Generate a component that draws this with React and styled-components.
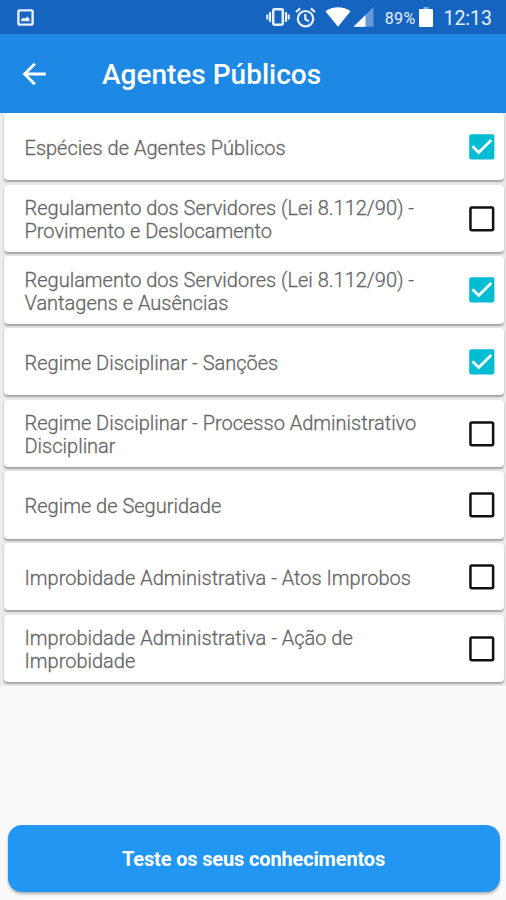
import React from "react";
import styled, { createGlobalStyle } from "styled-components";

const PRIMARY = "#1e88e5";
const PRIMARY_DARK = "#1565c0";
const BUTTON_COLOR = "#2196f3";
const ACCENT = "#00bcd4";

const GlobalStyle = createGlobalStyle`
  * {
    box-sizing: border-box;
  }
  body {
    margin: 0;
    font-family: Roboto, "Liberation Sans", sans-serif;
  }
`;

const Screen = styled.div`
  display: flex;
  flex-direction: column;
  height: 900px;
  overflow: hidden;
  background: #fafafa;
`;

const StatusBar = styled.div`
  display: flex;
  flex: none;
  align-items: center;
  height: 34px;
  padding: 0 14px 0 17px;
  background: ${PRIMARY_DARK};
  color: #e8effa;
  svg {
    display: block;
    flex: none;
  }
`;

const StatusIcons = styled.div`
  display: flex;
  align-items: center;
  margin-left: auto;
`;

const Connection = styled.div`
  display: flex;
  gap: 2px;
  margin-left: 9px;
`;

const Alerts = styled.div`
  display: flex;
  align-items: center;
  gap: 5px;
`;

const Battery = styled.span`
  margin: 2px 4px 0 11px;
  font-size: 16px;
  letter-spacing: 0.3px;
`;

const Clock = styled.span`
  margin: 3px 0 0 10px;
  font-size: 19.5px;
`;

const Toolbar = styled.header`
  display: flex;
  flex: none;
  align-items: center;
  height: 79px;
  padding: 0 22px;
  background: ${PRIMARY};
  color: white;
`;

const BackButton = styled.button`
  display: flex;
  width: 80px;
  padding: 0;
  border: none;
  background: none;
  color: inherit;
`;

const Title = styled.h1`
  margin: 1px 0 0;
  font-size: 28px;
  font-weight: 500;
`;

const List = styled.ul`
  display: flex;
  flex: none;
  flex-direction: column;
  gap: 4.4px;
  margin: 0;
  padding: 0 2px 4px 4px;
  background: #ececec;
  list-style: none;
`;

const Card = styled.li`
  display: flex;
  align-items: center;
  justify-content: space-between;
  height: 67.3px;
  padding: 0 5.5px 0 20.5px;
  border-radius: 4px;
  background: white;
  box-shadow: 0 1.5px 2px rgba(0, 0, 0, 0.32);
`;

const Label = styled.span`
  width: 410px;
  padding-top: 3.5px;
  color: #666;
  font-size: 20px;
  font-weight: 300;
  line-height: 23px;
  -webkit-text-stroke: 0.3px #666;
`;

const CheckIcon = styled.svg`
  display: block;
  flex: none;
  width: 33.6px;
  height: 33.6px;
`;

const Footer = styled.footer`
  display: flex;
  margin-top: auto;
  padding: 0 6px 8.5px 8px;
`;

const TestButton = styled.button`
  flex: 1;
  height: 66.5px;
  padding: 1px 1px 0 0;
  border: none;
  border-radius: 14px;
  background: ${BUTTON_COLOR};
  box-shadow: 0 2px 3px rgba(0, 0, 0, 0.3);
  color: white;
  font-family: inherit;
  font-size: 20px;
  font-weight: 700;
  letter-spacing: -0.15px;
`;

const topics = [
  { label: "Espécies de Agentes Públicos", checked: true },
  {
    label: "Regulamento dos Servidores (Lei 8.112/90) - Provimento e Deslocamento"
  },
  {
    label: "Regulamento dos Servidores (Lei 8.112/90) - Vantagens e Ausências",
    checked: true
  },
  { label: "Regime Disciplinar - Sanções", checked: true },
  { label: "Regime Disciplinar - Processo Administrativo Disciplinar" },
  { label: "Regime de Seguridade" },
  { label: "Improbidade Administrativa - Atos Improbos" },
  { label: "Improbidade Administrativa - Ação de Improbidade" }
];

const Checkbox = ({ checked }) => (
  <CheckIcon viewBox="0 0 24 24" role="checkbox" aria-checked={!!checked}>
    {checked ? (
      <>
        <rect x="3" y="3" width="18" height="18" rx="1.6" fill={ACCENT} />
        <path
          d="M5.3 11.6l4.5 4.5 9-9"
          fill="none"
          stroke="white"
          strokeWidth="2"
        />
      </>
    ) : (
      <rect
        x="3.9"
        y="3.9"
        width="16.2"
        height="16.2"
        rx="1"
        fill="none"
        stroke="#111"
        strokeWidth="1.8"
      />
    )}
  </CheckIcon>
);

const PictureIcon = () => (
  <svg width="17" height="17" viewBox="0 0 17 17">
    <rect
      x="1.4"
      y="1.4"
      width="14.2"
      height="14.2"
      rx="1"
      fill="none"
      stroke="currentColor"
      strokeWidth="2.4"
    />
    <path d="M4.3 12.2V10l2-1.3 1.7.8 2.3-2 2.2 2.3v2.4z" fill="currentColor" />
  </svg>
);

const VibrateIcon = () => (
  <svg width="24" height="20" viewBox="0 0 24 20">
    <rect
      x="7.2"
      y="2.2"
      width="9.6"
      height="15.6"
      rx="1.2"
      fill="none"
      stroke="currentColor"
      strokeWidth="2.5"
    />
    <path
      d="M4 5v10M20 5v10M1.3 7.5v5M22.7 7.5v5"
      stroke="currentColor"
      strokeWidth="2.1"
    />
  </svg>
);

const AlarmIcon = () => (
  <svg width="21" height="21" viewBox="0 0 21 21">
    <g fill="none" stroke="currentColor" strokeWidth="2.2">
      <circle cx="10.5" cy="11.7" r="7.7" />
      <path d="M10.3 7v5.2l3.6 2.2M1 5l4.2-3.6M20 5l-4.2-3.6" />
    </g>
  </svg>
);

const WifiIcon = () => (
  <svg width="26" height="20" viewBox="0 0 26 20">
    <path d="M0.5 4.3C7.5-1 18.5-1 25.5 4.3L13 19.8z" fill="white" />
  </svg>
);

const SignalIcon = () => (
  <svg width="21" height="20" viewBox="0 0 21 20">
    <path d="M0.5 19.7L20.5 0v19.7z" fill="white" opacity="0.35" />
    <path d="M0.5 19.7L12.5 7.9v11.8z" fill="white" />
  </svg>
);

const BatteryIcon = () => (
  <svg width="14" height="20" viewBox="0 0 14 20">
    <path d="M4.5 0h5v2.5h-5z" fill="white" opacity="0.45" />
    <rect y="2" width="14" height="18" rx="1" fill="white" />
  </svg>
);

const BackIcon = () => (
  <svg width="25" height="24" viewBox="0 0 25 24">
    <path
      d="M12.8 1.7L2.6 12l10.2 10.3M2.6 12h21.2"
      fill="none"
      stroke="currentColor"
      strokeWidth="2.9"
    />
  </svg>
);

export default function App() {
  return (
    <Screen>
      <GlobalStyle />
      <StatusBar>
        <PictureIcon />
        <StatusIcons>
          <Alerts>
            <VibrateIcon />
            <AlarmIcon />
          </Alerts>
          <Connection>
            <WifiIcon />
            <SignalIcon />
          </Connection>
          <Battery>89%</Battery>
          <BatteryIcon />
          <Clock>12:13</Clock>
        </StatusIcons>
      </StatusBar>
      <Toolbar>
        <BackButton aria-label="Voltar">
          <BackIcon />
        </BackButton>
        <Title>Agentes Públicos</Title>
      </Toolbar>
      <List>
        {topics.map(({ label, checked }) => (
          <Card key={label}>
            <Label>{label}</Label>
            <Checkbox checked={checked} />
          </Card>
        ))}
      </List>
      <Footer>
        <TestButton>Teste os seus conhecimentos</TestButton>
      </Footer>
    </Screen>
  );
}
